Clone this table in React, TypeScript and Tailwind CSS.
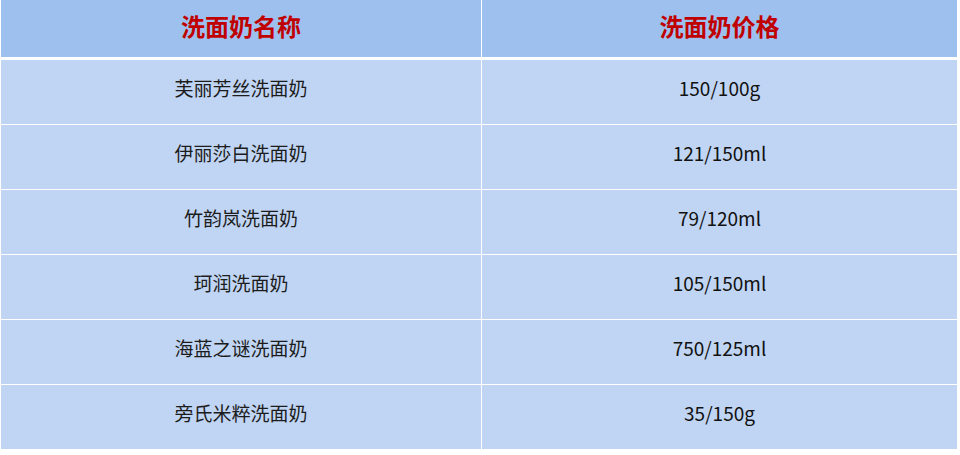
const rows: Array<{ name: string; price: string }> = [
  { name: '芙丽芳丝洗面奶', price: '150/100g' },
  { name: '伊丽莎白洗面奶', price: '121/150ml' },
  { name: '竹韵岚洗面奶', price: '79/120ml' },
  { name: '珂润洗面奶', price: '105/150ml' },
  { name: '海蓝之谜洗面奶', price: '750/125ml' },
  { name: '旁氏米粹洗面奶', price: '35/150g' },
];

const font = "font-['Microsoft_YaHei','Noto_Sans_CJK_SC',sans-serif]";

export default function App() {
  return (
    <div className={`w-[960px] h-[455px] bg-white pl-px ${font}`}>
      <div className="w-[956px] flex flex-col">
        <div className="grid grid-cols-[480px_475px] gap-x-px h-[57px]">
          <div className="bg-[#9ec0ee] flex items-center justify-center pb-[6px] text-[24px] font-bold text-[#c00000]">
            洗面奶名称
          </div>
          <div className="bg-[#9ec0ee] flex items-center justify-center pb-[6px] text-[24px] font-bold text-[#c00000]">
            洗面奶价格
          </div>
        </div>
        <div className="grid grid-cols-[480px_475px] gap-x-px gap-y-px mt-[3px]">
          {rows.map((row) => (
            <div key={row.name} className="contents">
              <div className="bg-[#c0d5f3] h-[64px] flex items-center justify-center pb-[7px] text-[19px] text-[#1c1c1c]">
                {row.name}
              </div>
              <div className="bg-[#c0d5f3] h-[64px] flex items-center justify-center pb-[7px] text-[19px] text-[#111]">
                {row.price}
              </div>
            </div>
          ))}
        </div>
      </div>
    </div>
  );
}
